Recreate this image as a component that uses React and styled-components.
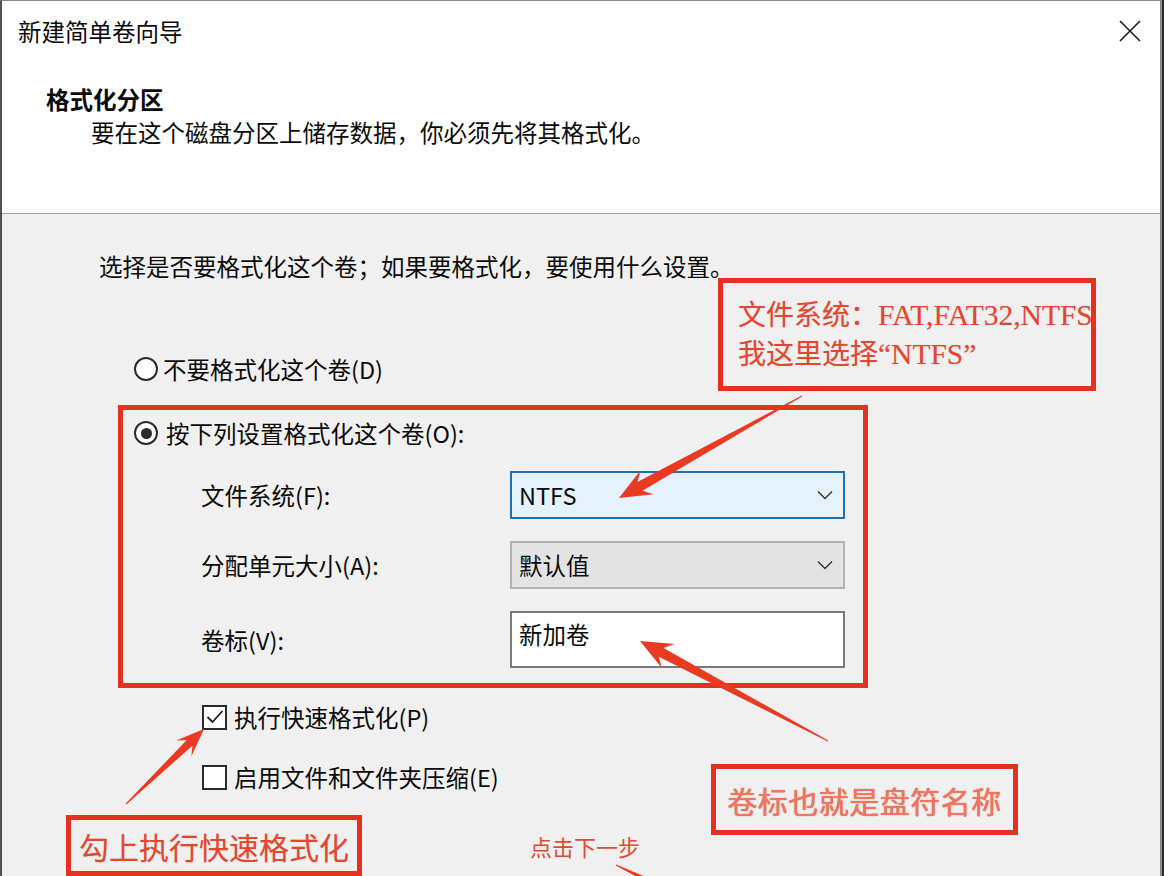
import React from 'react';
import styled, { createGlobalStyle } from 'styled-components';

const GlobalStyle = createGlobalStyle`
  html, body {
    margin: 0;
    padding: 0;
    background: #2f2f2f;
  }
  * {
    box-sizing: border-box;
  }
`;

const ui = '"Noto Sans CJK SC", "Noto Sans", sans-serif';
const red = '#e3321e';

const Page = styled.div`
  position: relative;
  width: 1164px;
  height: 876px;
  overflow: hidden;
  font-family: ${ui};
  color: #0a0a0a;
`;

const Window = styled.div`
  width: 1162px;
  height: 876px;
  display: flex;
  flex-direction: column;
  border-left: 2px solid #505050;
  border-right: 2px solid #8a8a8a;
  border-top: 1px solid #8c8c8c;
  background: #f0f0f0;
`;

const Header = styled.header`
  height: 213px;
  flex: none;
  background: #ffffff;
  border-bottom: 1px solid #a3a3a3;
  padding: 15px 18px 0 16px;
`;

const TitleRow = styled.div`
  display: flex;
  justify-content: space-between;
  align-items: center;
  height: 30px;
`;

const Title = styled.div`
  font-size: 23.5px;
  line-height: 30px;
`;

const CloseButton = styled.button`
  width: 24px;
  height: 24px;
  padding: 0;
  border: 0;
  background: transparent;
  display: flex;
  align-items: center;
  justify-content: center;
`;

const PageTitle = styled.h1`
  margin: 38px 0 0 28px;
  font-size: 23.5px;
  line-height: 30px;
  font-weight: 700;
`;

const PageSub = styled.p`
  margin: 3px 0 0 73px;
  font-size: 23.5px;
  line-height: 30px;
`;

const Body = styled.main`
  flex: 1;
  display: flex;
  flex-direction: column;
  align-items: flex-start;
  padding-top: 37px;
  font-size: 23.5px;
  line-height: 30px;
`;

const Intro = styled.p`
  margin: 0 0 0 97px;
`;

const OptionRow = styled.label`
  display: flex;
  align-items: center;
  gap: ${p => p.$gap || 6}px;
  height: 30px;
  margin-left: ${p => p.$left || 0}px;
  margin-top: ${p => p.$top || 0}px;
`;

const Radio = styled.span`
  width: 24px;
  height: 24px;
  border-radius: 50%;
  border: 2px solid #2b2b2b;
  background: #fff;
  display: flex;
  align-items: center;
  justify-content: center;

  &::after {
    content: '';
    width: 11px;
    height: 11px;
    border-radius: 50%;
    background: #2b2b2b;
    display: ${p => (p.$on ? 'block' : 'none')};
  }
`;

const Check = styled.span`
  width: 25px;
  height: 25px;
  border: 2px solid #2b2b2b;
  background: #fff;
  display: flex;
  align-items: center;
  justify-content: center;
`;

const Group = styled.section`
  margin: 21px 0 0 116px;
  width: 750px;
  border: 5px solid ${red};
  padding: 8px 18px 15px 11px;
`;

const FieldGrid = styled.div`
  display: grid;
  grid-template-columns: 309px 335px;
  grid-template-rows: 48px 48px 57px;
  row-gap: 22px;
  align-items: center;
  margin: 23px 0 0 67px;
`;

const FieldLabel = styled.span``;

const Combo = styled.div`
  height: 100%;
  display: flex;
  align-items: center;
  justify-content: space-between;
  padding: 0 10px 0 7px;
  border: 2px solid ${p => (p.$focus ? '#1f6fb4' : '#b3b3b3')};
  background: ${p => (p.$focus ? '#e5f1fb' : '#e3e3e3')};
`;

const TextBox = styled.div`
  height: 100%;
  padding: 6px 7px 0;
  border: 2px solid #7a7a7a;
  background: #fff;
`;

const Note = styled.div`
  position: absolute;
  left: ${p => p.$x}px;
  top: ${p => p.$y}px;
  width: ${p => p.$w}px;
  height: ${p => p.$h}px;
  border: 5px solid ${red};
  overflow: hidden;
  color: #e2472f;
  font-family: ${p => (p.$serif ? `"Liberation Serif", ${ui}` : ui)};
  font-size: ${p => p.$size || 28}px;
  text-shadow: 0 0 1px rgba(225, 60, 40, 0.3);
  ${p =>
    p.$center
      ? 'display: flex; align-items: center; justify-content: center;'
      : 'padding: 13px 0 0 15px; line-height: 38px; white-space: nowrap;'}
`;

const Latin = styled.span`
  font-size: 29.5px;
`;

const LabelNote = styled.span`
  color: #f17561;
  text-shadow: 0 0 1px #d83a25;
  letter-spacing: 0.5px;
`;

const FreeNote = styled.div`
  position: absolute;
  left: 530px;
  top: 831px;
  font-size: 22px;
  line-height: 30px;
  color: #e04a33;
`;

const Arrows = styled.svg`
  position: absolute;
  inset: 0;
  pointer-events: none;
`;

function Chevron() {
  return (
    <svg width="16" height="10" viewBox="0 0 16 10">
      <polyline points="1,1.5 8,8.5 15,1.5" fill="none" stroke="#333" strokeWidth="1.4" />
    </svg>
  );
}

function arrowShape([tx, ty], [hx, hy], head, headW, shaft) {
  const len = Math.hypot(hx - tx, hy - ty);
  const ux = (hx - tx) / len;
  const uy = (hy - ty) / len;
  const nx = -uy;
  const ny = ux;
  const bx = hx - ux * head;
  const by = hy - uy * head;
  const pt = (x, y, w) => `${(x + nx * w).toFixed(1)},${(y + ny * w).toFixed(1)}`;
  return [
    pt(tx, ty, 0.5),
    pt(bx + ux * 4, by + uy * 4, shaft / 2),
    pt(bx - ux * 4, by - uy * 4, headW / 2),
    `${hx},${hy}`,
    pt(bx - ux * 4, by - uy * 4, -headW / 2),
    pt(bx + ux * 4, by + uy * 4, -shaft / 2),
    pt(tx, ty, -0.5),
  ].join(' ');
}

const arrows = [
  { from: [802, 396], to: [619, 498], head: 28, headW: 27, shaft: 10 },
  { from: [828, 741], to: [640, 641], head: 28, headW: 27, shaft: 10 },
  { from: [126, 804], to: [204, 729], head: 24, headW: 22, shaft: 8 },
  { from: [616, 865], to: [720, 915], head: 28, headW: 27, shaft: 10 },
];

export default function App() {
  return (
    <Page>
      <GlobalStyle />
      <Window>
        <Header>
          <TitleRow>
            <Title>新建简单卷向导</Title>
            <CloseButton aria-label="关闭">
              <svg width="22" height="22" viewBox="0 0 22 22">
                <path d="M1 1 L21 21 M21 1 L1 21" stroke="#1a1a1a" strokeWidth="1.6" />
              </svg>
            </CloseButton>
          </TitleRow>
          <PageTitle>格式化分区</PageTitle>
          <PageSub>要在这个磁盘分区上储存数据，你必须先将其格式化。</PageSub>
        </Header>

        <Body>
          <Intro>选择是否要格式化这个卷；如果要格式化，要使用什么设置。</Intro>

          <OptionRow $left={132} $top={73} $gap={5}>
            <Radio />
            不要格式化这个卷(D)
          </OptionRow>

          <Group>
            <OptionRow $gap={8}>
              <Radio $on />
              按下列设置格式化这个卷(O):
            </OptionRow>
            <FieldGrid>
              <FieldLabel>文件系统(F):</FieldLabel>
              <Combo $focus>
                NTFS
                <Chevron />
              </Combo>
              <FieldLabel>分配单元大小(A):</FieldLabel>
              <Combo>
                默认值
                <Chevron />
              </Combo>
              <FieldLabel>卷标(V):</FieldLabel>
              <TextBox>新加卷</TextBox>
            </FieldGrid>
          </Group>

          <OptionRow $left={200} $top={14} $gap={7}>
            <Check>
              <svg width="18" height="16" viewBox="0 0 18 16">
                <polyline points="1.5,8 6.5,13 16.5,2" fill="none" stroke="#1e1e1e" strokeWidth="1.8" />
              </svg>
            </Check>
            执行快速格式化(P)
          </OptionRow>
          <OptionRow $left={200} $top={30} $gap={7}>
            <Check />
            启用文件和文件夹压缩(E)
          </OptionRow>
        </Body>
      </Window>

      <Note $x={718} $y={278} $w={378} $h={113} $serif>
        <div>
          文件系统：<Latin>FAT,FAT32,NTFS</Latin>
        </div>
        <div>
          我这里选择<Latin>“NTFS”</Latin>
        </div>
      </Note>
      <Note $x={711} $y={764} $w={307} $h={71} $size={30} $center>
        <LabelNote>卷标也就是盘符名称</LabelNote>
      </Note>
      <Note $x={66} $y={815} $w={296} $h={61} $size={30} $center>
        勾上执行快速格式化
      </Note>
      <FreeNote>点击下一步</FreeNote>

      <Arrows width="1164" height="876" viewBox="0 0 1164 876">
        {arrows.map((a, i) => (
          <polygon key={i} points={arrowShape(a.from, a.to, a.head, a.headW, a.shaft)} fill="#ea3a22" />
        ))}
      </Arrows>
    </Page>
  );
}
